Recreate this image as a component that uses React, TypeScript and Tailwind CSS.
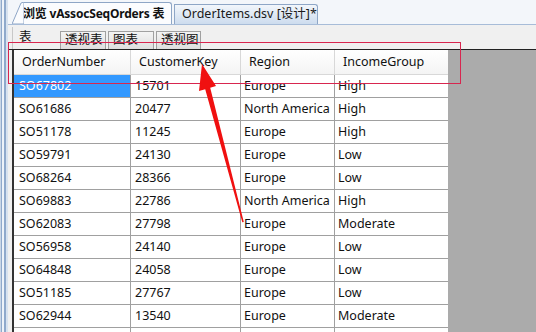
import React from "react";

const rows: [string, string, string, string][] = [
  ["SO67802", "15701", "Europe", "High"],
  ["SO61686", "20477", "North America", "High"],
  ["SO51178", "11245", "Europe", "High"],
  ["SO59791", "24130", "Europe", "Low"],
  ["SO68264", "28366", "Europe", "Low"],
  ["SO69883", "22786", "North America", "High"],
  ["SO62083", "27798", "Europe", "Moderate"],
  ["SO56958", "24140", "Europe", "Low"],
  ["SO64848", "24058", "Europe", "Low"],
  ["SO51185", "27767", "Europe", "Low"],
  ["SO62944", "13540", "Europe", "Moderate"],
  ["", "", "", ""],
];

const font = { fontFamily: '"Noto Sans", "Noto Sans CJK SC", sans-serif' };

export default function App() {
  return (
    <div
      className="relative w-[536px] h-[332px] overflow-hidden flex bg-[#f0f0f0] text-[12.5px] text-[#111]"
      style={font}
    >
      {/* left strip */}
      <div className="w-[8px] h-full flex shrink-0">
        <div className="w-[1px] bg-[#c9d6e6]" />
        <div className="w-[1px] bg-[#8fa9cb]" />
        <div className="w-[2px] bg-[#eef3f9]" />
        <div className="w-[2px] bg-[#8fa9cb]" />
        <div className="w-[2px] bg-[#d7e2ef]" />
      </div>

      <div className="flex-1 flex flex-col min-w-0">
        {/* document tabs */}
        <div className="h-[25px] bg-[#f3f6fa] border-b border-[#a7bcd8] flex items-end pl-[4px] shrink-0">
          <div className="relative h-[22px] w-[160px] shrink-0 flex items-end">
            <svg className="absolute left-0 top-0" width="12" height="22" viewBox="0 0 12 22">
              <path d="M0 22 L9 1 L12 0 L12 22 Z" fill="#fbfcfe" stroke="#8ea6c6" strokeWidth="1" />
            </svg>
            <div className="ml-[11px] h-[22px] flex-1 bg-[#fbfcfe] border-t border-r border-[#8ea6c6] rounded-tr-[3px] flex items-center font-bold text-[12px] tracking-[-0.2px] text-[#111] whitespace-nowrap">
              浏览 vAssocSeqOrders 表
            </div>
          </div>
          <div className="ml-[2px] h-[20px] w-[144px] shrink-0 border border-b-0 border-[#8ea6c6] rounded-tr-[3px] bg-gradient-to-b from-[#f2f6fb] to-[#cddcee] flex items-center pl-[7px] text-[12.5px] text-[#1a1a1a] whitespace-nowrap">
            OrderItems.dsv [设计]*
          </div>
        </div>

        {/* sub tabs */}
        <div className="h-[24px] flex items-end pl-[4px] shrink-0 text-[12.5px]">
          <div className="h-[22px] w-[48px] border-l border-[#c8c8c8] flex items-start pl-[6px] pt-[1px]">表</div>
          <div className="h-[18px] w-[46px] border border-b-0 border-[#a0a0a0] bg-gradient-to-b from-[#f4f4f4] to-[#dedede] flex items-center pl-[4px] leading-none">透视表</div>
          <div className="ml-[2px] h-[18px] w-[46px] border border-b-0 border-[#a0a0a0] bg-gradient-to-b from-[#f4f4f4] to-[#dedede] flex items-center pl-[4px] leading-none">图表</div>
          <div className="ml-[2px] h-[18px] w-[45px] border border-b-0 border-[#a0a0a0] bg-gradient-to-b from-[#f4f4f4] to-[#dedede] flex items-center pl-[4px] leading-none">透视图</div>
        </div>

        {/* grid */}
        <div className="flex-1 flex border-t border-[#222] pl-[4px] min-h-0">
          <div className="w-[436px] border-l-2 border-[#333] bg-white shrink-0">
            <div className="h-[25px] flex border-b border-[#d8d8d8] bg-gradient-to-b from-white to-[#f4f4f4]">
              <div className="w-[117px] border-r border-[#d8d8d8] pl-[8px] flex items-center">OrderNumber</div>
              <div className="w-[110px] border-r border-[#d8d8d8] pl-[8px] flex items-center">CustomerKey</div>
              <div className="w-[94px] border-r border-[#d8d8d8] pl-[8px] flex items-center">Region</div>
              <div className="flex-1 pl-[8px] flex items-center">IncomeGroup</div>
            </div>
            {rows.map((r, i) => (
              <div key={i} className="h-[23px] flex border-b border-[#a0a0a0]">
                <div
                  className={
                    i === 0
                      ? "w-[117px] border-r border-[#a0a0a0] pl-[5px] flex items-center bg-[#3399ff] text-white"
                      : "w-[117px] border-r border-[#a0a0a0] pl-[5px] flex items-center"
                  }
                >
                  {r[0]}
                </div>
                <div className="w-[110px] border-r border-[#a0a0a0] pl-[4px] flex items-center">{r[1]}</div>
                <div className="w-[94px] border-r border-[#a0a0a0] pl-[3px] flex items-center whitespace-nowrap">{r[2]}</div>
                <div className="flex-1 pl-[3px] flex items-center">{r[3]}</div>
              </div>
            ))}
          </div>
          <div className="flex-1 bg-[#ababab]" />
        </div>
      </div>

      {/* red annotation rectangle */}
      <div className="absolute left-[8px] top-[42px] w-[453px] h-[42px] border border-[#d8264f]" />

      {/* red arrow */}
      <svg className="absolute left-0 top-0 pointer-events-none" width="536" height="332" viewBox="0 0 536 332">
        <polygon
          points="202,64 216,86 210.2,87.8 243.8,222 242.3,222.3 205.2,89.2 199,91"
          fill="#f01010"
        />
      </svg>
    </div>
  );
}
